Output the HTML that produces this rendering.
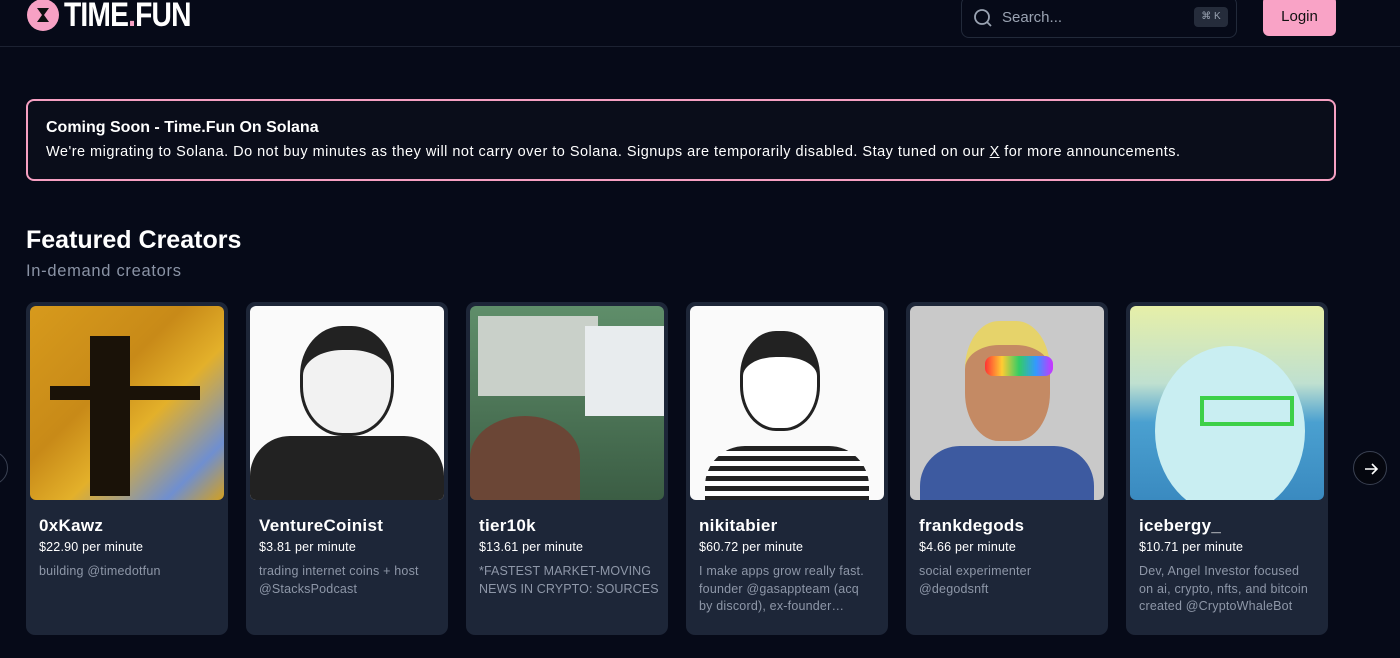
<!DOCTYPE html>
<html><head><meta charset="utf-8"><style>
*{box-sizing:border-box;margin:0;padding:0}
body{width:1400px;height:658px;overflow:hidden;background:#060a18;font-family:"Liberation Sans",sans-serif;color:#fff;position:relative}
.hdr{position:absolute;left:0;top:0;width:1400px;height:47px;border-bottom:1px solid #1c2232}
.logo{position:absolute;left:27px;top:0;display:flex;align-items:center}
.logo .c{width:32px;height:32px;border-radius:50%;background:#f7a1c4;position:relative;top:-1px}
.logo .t{font-weight:bold;font-size:34px;letter-spacing:-1px;margin-left:5px;transform:scaleX(.83);transform-origin:left;line-height:32px;top:-1px;position:relative}
.search{position:absolute;left:961px;top:-4px;width:276px;height:42px;border:1px solid #222a3a;border-radius:8px}
.search span.p{position:absolute;left:40px;top:12px;color:#9aa3b2;font-size:15px}
.kbd{position:absolute;left:232px;top:10px;width:34px;height:20px;background:#252c3b;border-radius:4px;color:#9aa3b2;font-size:10px;text-align:center;line-height:20px}
.login{position:absolute;left:1263px;top:-4px;width:73px;height:40px;background:#f9a3c6;border-radius:6px;color:#111;font-size:15px;text-align:center;line-height:42px}
.banner{position:absolute;left:26px;top:99px;width:1310px;height:82px;border:2px solid #f6a0c2;border-radius:8px;background:#0a0d1a}
.banner h3{position:absolute;left:18px;top:18px;font-size:16px;font-weight:bold;color:#fff;letter-spacing:0}
.banner p{position:absolute;left:18px;top:43px;font-size:14.5px;color:#fff;letter-spacing:.48px;white-space:nowrap}
h2{position:absolute;left:26px;top:226px;font-size:25px;letter-spacing:0}
.sub{position:absolute;left:26px;top:262px;font-size:16.5px;color:#8a93a5;letter-spacing:.7px}
.card{position:absolute;top:302px;width:202px;height:333px;background:#1d2638;border-radius:9px;overflow:hidden}
.img{position:absolute;left:4px;top:4px;width:194px;height:194px;border-radius:6px;overflow:hidden}
.n{position:absolute;left:13px;top:214px;font-size:17px;letter-spacing:.3px;font-weight:bold}
.pr{position:absolute;left:13px;top:238px;font-size:12.5px;letter-spacing:.2px}
.d{position:absolute;left:13px;top:261px;font-size:12.5px;color:#8e97a8;line-height:17.5px;width:185px;letter-spacing:.2px;white-space:nowrap}
.arrow{position:absolute;left:1353px;top:451px;width:34px;height:34px;border-radius:50%;background:#05070f;border:1px solid #3a4152}
.larrow{position:absolute;left:-26px;top:451px;width:34px;height:34px;border-radius:50%;border:1px solid #3a4152}
</style></head><body>
<div class="hdr">
<div class="logo"><div class="c"><svg width="32" height="32" viewBox="0 0 32 32"><path d="M10 9h12l-5 7 5 7H10l5-7z" fill="#111"/></svg></div><div class="t">TIME<span style="color:#f7a1c4">.</span>FUN</div></div>
<div class="search"><svg style="position:absolute;left:11px;top:11px" width="20" height="20" viewBox="0 0 20 20" fill="none" stroke="#9aa3b2" stroke-width="1.8"><circle cx="9" cy="9" r="7"/><path d="M14 14l4 4"/></svg><span class="p">Search...</span><div class="kbd">⌘ K</div></div>
<div class="login">Login</div>
</div>
<div class="banner"><h3>Coming Soon - Time.Fun On Solana</h3><p>We're migrating to Solana. Do not buy minutes as they will not carry over to Solana. Signups are temporarily disabled. Stay tuned on our <u>X</u> for more announcements.</p></div>
<h2>Featured Creators</h2>
<div class="sub">In-demand creators</div>
<div class="larrow"></div>

<div class="card" style="left:26px"><div class="img" style="background:linear-gradient(135deg,#d79a1c,#c88a18 40%,#e3b02a 60%,#6f8fd0 85%,#d3a020)"><div style="position:absolute;left:60px;top:30px;width:40px;height:160px;background:#1a1208"></div><div style="position:absolute;left:20px;top:80px;width:150px;height:14px;background:#1a1208"></div></div><div class="n">0xKawz</div><div class="pr">$22.90 per minute</div><div class="d">building @timedotfun</div></div>

<div class="card" style="left:246px"><div class="img" style="background:#fafafa"><div style="position:absolute;left:50px;top:20px;width:94px;height:110px;border-radius:45%;background:#f2f2f2;border:3px solid #222;border-top:24px solid #222"></div><div style="position:absolute;left:0;top:130px;width:194px;height:64px;background:#222;border-radius:40px 40px 0 0"></div></div><div class="n">VentureCoinist</div><div class="pr">$3.81 per minute</div><div class="d">trading internet coins + host<br>@StacksPodcast</div></div>

<div class="card" style="left:466px"><div class="img" style="background:linear-gradient(180deg,#5f8e6a,#3b5d44)"><div style="position:absolute;left:8px;top:10px;width:120px;height:80px;background:#c9d0c9"></div><div style="position:absolute;left:115px;top:20px;width:79px;height:90px;background:#e8ecee"></div><div style="position:absolute;left:0;top:110px;width:110px;height:84px;background:#6b4636;border-radius:50% 50% 0 0"></div></div><div class="n">tier10k</div><div class="pr">$13.61 per minute</div><div class="d" style="letter-spacing:.1px">*FASTEST MARKET-MOVING<br>NEWS IN CRYPTO: SOURCES</div></div>

<div class="card" style="left:686px"><div class="img" style="background:#fafafa"><div style="position:absolute;left:50px;top:25px;width:80px;height:100px;border-radius:45%;background:#fff;border:3px solid #222;border-top:26px solid #222"></div><div style="position:absolute;left:15px;top:140px;width:164px;height:54px;border-radius:40px 40px 0 0;background:repeating-linear-gradient(180deg,#222 0 5px,#fff 5px 10px)"></div></div><div class="n">nikitabier</div><div class="pr">$60.72 per minute</div><div class="d">I make apps grow really fast.<br>founder @gasappteam (acq<br>by discord), ex-founder…</div></div>

<div class="card" style="left:906px"><div class="img" style="background:#c9c9c9"><div style="position:absolute;left:55px;top:15px;width:85px;height:120px;border-radius:40%;background:#c48a64;border-top:24px solid #e6d36a"></div><div style="position:absolute;left:75px;top:50px;width:68px;height:20px;border-radius:8px;background:linear-gradient(90deg,#f33,#fc3,#3c6,#39f,#c3f)"></div><div style="position:absolute;left:10px;top:140px;width:174px;height:54px;background:#3d5aa0;border-radius:40px 40px 0 0"></div></div><div class="n">frankdegods</div><div class="pr">$4.66 per minute</div><div class="d">social experimenter<br>@degodsnft</div></div>

<div class="card" style="left:1126px"><div class="img" style="background:linear-gradient(180deg,#e6efa8,#bfe0d0 40%,#4aa0d0 60%,#3a8ac0)"><div style="position:absolute;left:25px;top:40px;width:150px;height:170px;border-radius:50%;background:#c9eef2"></div><div style="position:absolute;left:70px;top:90px;width:94px;height:30px;border:4px solid #3cd048"></div></div><div class="n">icebergy_</div><div class="pr">$10.71 per minute</div><div class="d">Dev, Angel Investor focused<br>on ai, crypto, nfts, and bitcoin<br>created @CryptoWhaleBot</div></div>

<div class="arrow"><svg width="34" height="34" viewBox="0 0 34 34" fill="none" stroke="#fff" stroke-width="1.6"><path d="M11 17h12M18 12l5 5-5 5"/></svg></div>
</body></html>
